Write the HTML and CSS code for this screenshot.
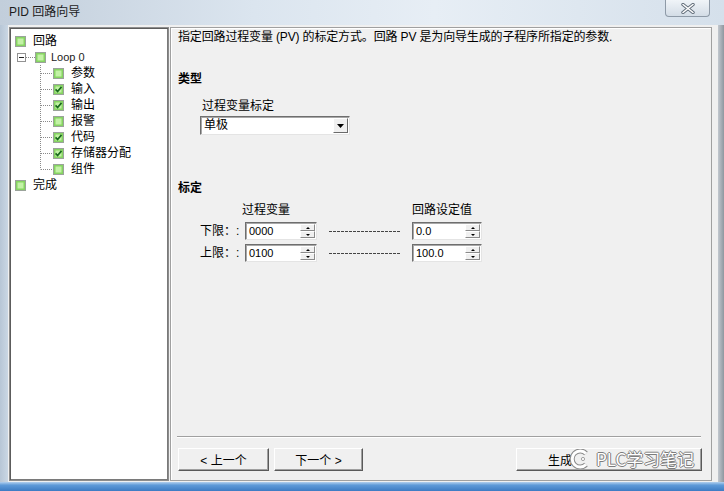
FILE: index.html
```html
<!DOCTYPE html>
<html lang="zh-CN">
<head>
  <meta charset="UTF-8">
  <title>PID 回路向导</title>
  <link rel="stylesheet" href="styles.css">
</head>
<body>
  <svg class="defs" width="0" height="0">
    <symbol id="box" viewBox="0 0 11 11">
      <rect x="0.5" y="0.5" width="10" height="10" fill="#86d462" stroke="#9aa39a"/>
      <rect x="2.5" y="2.5" width="6" height="6" fill="#c3f2a6"/>
    </symbol>
    <symbol id="box-on" viewBox="0 0 11 11">
      <rect x="0.5" y="0.5" width="10" height="10" fill="#86d462" stroke="#9aa39a"/>
      <rect x="2.5" y="2.5" width="6" height="6" fill="#c3f2a6"/>
      <path d="M2.6 5.4l2 2.1 3.9-4.6" fill="none" stroke="#186a1c" stroke-width="1.7"/>
    </symbol>
    <symbol id="conn" viewBox="0 0 13 16">
      <path d="M0.5 0V16M1 8.5H13" fill="none" stroke="#8a8a8a" stroke-dasharray="1 1"/>
    </symbol>
    <symbol id="conn-end" viewBox="0 0 13 16">
      <path d="M0.5 0V8.5M1 8.5H13" fill="none" stroke="#8a8a8a" stroke-dasharray="1 1"/>
    </symbol>
  </svg>

  <div class="titlebar">
    <span class="title">PID 回路向导</span>
    <span class="close-btn">
      <svg width="14" height="11" viewBox="0 0 14 11">
        <path d="M2 1.5l10 8M12 1.5l-10 8" stroke="#5f6b78" stroke-width="3.4" stroke-linecap="round"/>
        <path d="M2 1.5l10 8M12 1.5l-10 8" stroke="#ffffff" stroke-width="1.6" stroke-linecap="round"/>
      </svg>
    </span>
  </div>

  <div class="middle">
    <div class="frame-left"></div>
    <div class="client">
      <!-- wizard steps -->
      <div class="tree">
        <div class="node root"><svg class="ico"><use href="#box"/></svg><span>回路</span></div>
        <div class="node loop">
          <svg class="expander" width="9" height="9" viewBox="0 0 9 9">
            <rect x="0.5" y="0.5" width="8" height="8" fill="#fff" stroke="#929292"/>
            <path d="M2 4.5H7" stroke="#222"/>
          </svg>
          <svg class="dots" width="9" height="16" viewBox="0 0 9 16"><path d="M0 8.5H9" stroke="#8a8a8a" stroke-dasharray="1 1"/></svg>
          <svg class="ico"><use href="#box"/></svg><span class="latin">Loop 0</span>
        </div>
        <div class="node child"><svg class="conn"><use href="#conn"/></svg><svg class="ico"><use href="#box"/></svg><span>参数</span></div>
        <div class="node child"><svg class="conn"><use href="#conn"/></svg><svg class="ico"><use href="#box-on"/></svg><span>输入</span></div>
        <div class="node child"><svg class="conn"><use href="#conn"/></svg><svg class="ico"><use href="#box-on"/></svg><span>输出</span></div>
        <div class="node child"><svg class="conn"><use href="#conn"/></svg><svg class="ico"><use href="#box"/></svg><span>报警</span></div>
        <div class="node child"><svg class="conn"><use href="#conn"/></svg><svg class="ico"><use href="#box-on"/></svg><span>代码</span></div>
        <div class="node child"><svg class="conn"><use href="#conn"/></svg><svg class="ico"><use href="#box-on"/></svg><span>存储器分配</span></div>
        <div class="node child"><svg class="conn"><use href="#conn-end"/></svg><svg class="ico"><use href="#box"/></svg><span>组件</span></div>
        <div class="node root"><svg class="ico"><use href="#box"/></svg><span>完成</span></div>
      </div>

      <!-- step page -->
      <div class="panel">
        <p class="desc">指定回路过程变量 (PV) 的标定方式。回路 PV 是为向导生成的子程序所指定的参数.</p>

        <h3 class="heading">类型</h3>
        <div class="field-label">过程变量标定</div>
        <div class="select">
          <span class="select-val">单极</span>
          <span class="select-btn">
            <svg width="7" height="4" viewBox="0 0 7 4"><path d="M0 0H7L3.5 4Z" fill="#000"/></svg>
          </span>
        </div>

        <h3 class="heading heading-scale">标定</h3>
        <div class="scale-grid">
          <span></span>
          <span class="col-head col-pv">过程变量</span>
          <span></span>
          <span class="col-head">回路设定值</span>

          <span class="row-label">下限：:</span>
          <div class="spin"><span class="spin-val">0000</span><span class="spin-btns"><i class="up"></i><i class="down"></i></span></div>
          <span class="dash"></span>
          <div class="spin"><span class="spin-val">0.0</span><span class="spin-btns"><i class="up"></i><i class="down"></i></span></div>

          <span class="row-label">上限：:</span>
          <div class="spin"><span class="spin-val">0100</span><span class="spin-btns"><i class="up"></i><i class="down"></i></span></div>
          <span class="dash"></span>
          <div class="spin"><span class="spin-val">100.0</span><span class="spin-btns"><i class="up"></i><i class="down"></i></span></div>
        </div>

        <div class="footer">
          <div class="separator"></div>
          <div class="buttons">
            <button class="btn btn-prev">&lt; 上一个</button>
            <button class="btn btn-next">下一个 &gt;</button>
            <button class="btn btn-gen">生成</button>
          </div>
        </div>
      </div>
    </div>
    <div class="frame-right"></div>
  </div>
  <div class="frame-bottom"></div>

  <div class="watermark">
    <svg width="22" height="20" viewBox="0 0 22 20">
      <path d="M17 4.5A8 8 0 1 0 17 15.5" fill="none" stroke="#8c8c8c" stroke-width="5"/>
      <path d="M17 4.5A8 8 0 1 0 17 15.5" fill="none" stroke="#ffffff" stroke-width="3"/>
      <circle cx="14" cy="10" r="1.6" fill="#fff" stroke="#8c8c8c" stroke-width="0.8"/>
    </svg>
    <span class="wm-text">PLC学习笔记</span>
  </div>
</body>
</html>
```

FILE: styles.css
```css
body {
  margin: 0;
  width: 724px;
  height: 491px;
  overflow: hidden;
  position: relative;
  font-family: "Liberation Sans", "Noto Sans CJK SC", sans-serif;
  font-size: 12px;
  color: #000;
  background: #c5d3e1;
}

.defs {
  position: absolute;
  width: 0;
  height: 0;
}

.titlebar {
  height: 25px;
  display: flex;
  align-items: flex-start;
  background: linear-gradient(to right, #c2cedb 0%, #dbe5ef 35%, #e7eef5 60%, #d5e0eb 100%);
}

.title {
  margin: 4px 0 0 9px;
  line-height: 16px;
  color: #1c1c1c;
}

.close-btn {
  margin-left: auto;
  margin-right: 14px;
  width: 45px;
  height: 17px;
  box-sizing: border-box;
  border: 1px solid #8e9aa7;
  border-top: none;
  border-radius: 0 0 4px 4px;
  background: linear-gradient(#f0f4f8, #d3dce6);
  display: flex;
  align-items: center;
  justify-content: center;
}

.middle {
  display: flex;
  height: 457px;
}

.frame-left {
  width: 8px;
  background: linear-gradient(to right, #b7c6d6, #cad7e4);
}

.frame-right {
  width: 6px;
  background: linear-gradient(to right, #c2c8cf, #8f979f);
}

.frame-bottom {
  height: 9px;
  background: linear-gradient(#b3d0ee 0%, #5e9ad8 35%, #3d7bc3 100%);
}

.client {
  flex: 1;
  display: flex;
  gap: 1px;
  padding: 2px 6px 1px 1px;
  background: #f0f0f0;
}

/* tree */

.tree {
  width: 160px;
  box-sizing: border-box;
  border: 1px solid #8c8c8c;
  box-shadow: inset 1px 1px 0 #5c5c5c, inset -1px -1px 0 #7a7a7a;
  background: #fff;
  padding-top: 5px;
}

.node {
  height: 16px;
  display: flex;
  align-items: center;
  line-height: 16px;
  white-space: nowrap;
}

.node .ico {
  width: 11px;
  height: 11px;
  flex-shrink: 0;
}

.root {
  padding-left: 5px;
  gap: 7px;
}

.loop {
  padding-left: 7px;
}

.loop .ico {
  margin-right: 5px;
}

.latin {
  font-family: "Liberation Sans", sans-serif;
  font-size: 11px;
  color: #222;
}

.child {
  padding-left: 30px;
}

.child .conn {
  width: 13px;
  height: 16px;
}

.child .ico {
  margin-right: 7px;
}

/* step page */

.panel {
  flex: 1;
  display: flex;
  flex-direction: column;
  border: 1px solid #a0a0a0;
  box-shadow: inset 1px 1px 0 #fff;
  padding-left: 7px;
}

.desc {
  margin: 1px 0 0;
  line-height: 16px;
  letter-spacing: -0.15px;
  white-space: nowrap;
}

.heading {
  margin: 26px 0 0;
  font-size: 12px;
  line-height: 16px;
  font-weight: bold;
}

.heading-scale {
  margin-top: 45px;
}

.field-label {
  margin: 11px 0 0 24px;
  line-height: 16px;
}

.select {
  margin: 2px 0 0 22px;
  width: 150px;
  height: 19px;
  box-sizing: border-box;
  display: flex;
  border: 1px solid;
  border-color: #6e6e6e #e4e4e4 #e4e4e4 #6e6e6e;
  box-shadow: inset 1px 1px 0 #a8a8a8;
  background: #fff;
}

.select-val {
  flex: 1;
  padding-left: 3px;
  line-height: 17px;
}

.select-btn {
  width: 15px;
  margin: 1px 1px 1px 0;
  box-sizing: border-box;
  border: 1px solid;
  border-color: #fff #6a6a6a #6a6a6a #fff;
  background: #f0f0f0;
  display: flex;
  align-items: center;
  justify-content: center;
}

.scale-grid {
  margin: 6px 0 0 22px;
  display: grid;
  grid-template-columns: 45px 72px 95px 70px;
  grid-template-rows: 16px 18px 18px;
  row-gap: 4px;
  align-items: center;
}

.col-head {
  line-height: 16px;
  white-space: nowrap;
}

.col-pv {
  margin-left: -3px;
}

.row-label {
  line-height: 16px;
  white-space: nowrap;
}

.spin {
  height: 18px;
  box-sizing: border-box;
  display: flex;
  border: 1px solid;
  border-color: #6e6e6e #e4e4e4 #e4e4e4 #6e6e6e;
  box-shadow: inset 1px 1px 0 #a8a8a8;
  background: #fff;
}

.spin-val {
  flex: 1;
  padding-left: 3px;
  line-height: 16px;
  font-size: 11px;
}

.spin-btns {
  width: 16px;
  display: flex;
  flex-direction: column;
  padding: 1px 1px 1px 0;
  box-sizing: border-box;
}

.spin-btns i {
  flex: 1;
  position: relative;
  border: 1px solid;
  border-color: #fff #8a8a8a #8a8a8a #fff;
  background: #f0f0f0;
}

.spin-btns i::after {
  content: "";
  position: absolute;
  left: 50%;
  top: 50%;
  margin: -1px 0 0 -2px;
  border-left: 2px solid transparent;
  border-right: 2px solid transparent;
}

.spin-btns .up::after {
  border-bottom: 2px solid #000;
}

.spin-btns .down::after {
  border-top: 2px solid #000;
}

.dash {
  height: 1px;
  margin: 0 11px 0 12px;
  background: repeating-linear-gradient(to right, #444 0 3px, transparent 3px 4px);
}

.footer {
  margin-top: auto;
  padding-bottom: 9px;
}

.separator {
  margin: 0 10px 0 -1px;
  border-top: 1px solid #a0a0a0;
  border-bottom: 1px solid #fff;
}

.buttons {
  display: flex;
  gap: 5px;
  margin-top: 10px;
  margin-right: 9px;
}

.btn {
  height: 23px;
  padding: 0;
  font-family: "Liberation Sans", "Noto Sans CJK SC", sans-serif;
  font-size: 12px;
  color: #000;
  background: #f0f0f0;
  border: 1px solid;
  border-color: #fff #5a5a5a #5a5a5a #fff;
  box-shadow: inset -1px -1px 0 #a0a0a0;
}

.btn-prev {
  width: 91px;
}

.btn-next {
  width: 89px;
}

.btn-gen {
  width: 186px;
  margin-left: auto;
  text-align: left;
  padding-left: 31px;
}

.watermark {
  position: absolute;
  left: 569px;
  top: 449px;
  display: flex;
  align-items: center;
  gap: 5px;
}

.wm-text {
  font-family: "Noto Sans CJK SC", sans-serif;
  font-size: 17px;
  line-height: 20px;
  color: #fff;
  text-shadow: 1px 0 0 #7d7d7d, -1px 0 0 #7d7d7d, 0 1px 0 #7d7d7d, 0 -1px 0 #7d7d7d;
}
```
